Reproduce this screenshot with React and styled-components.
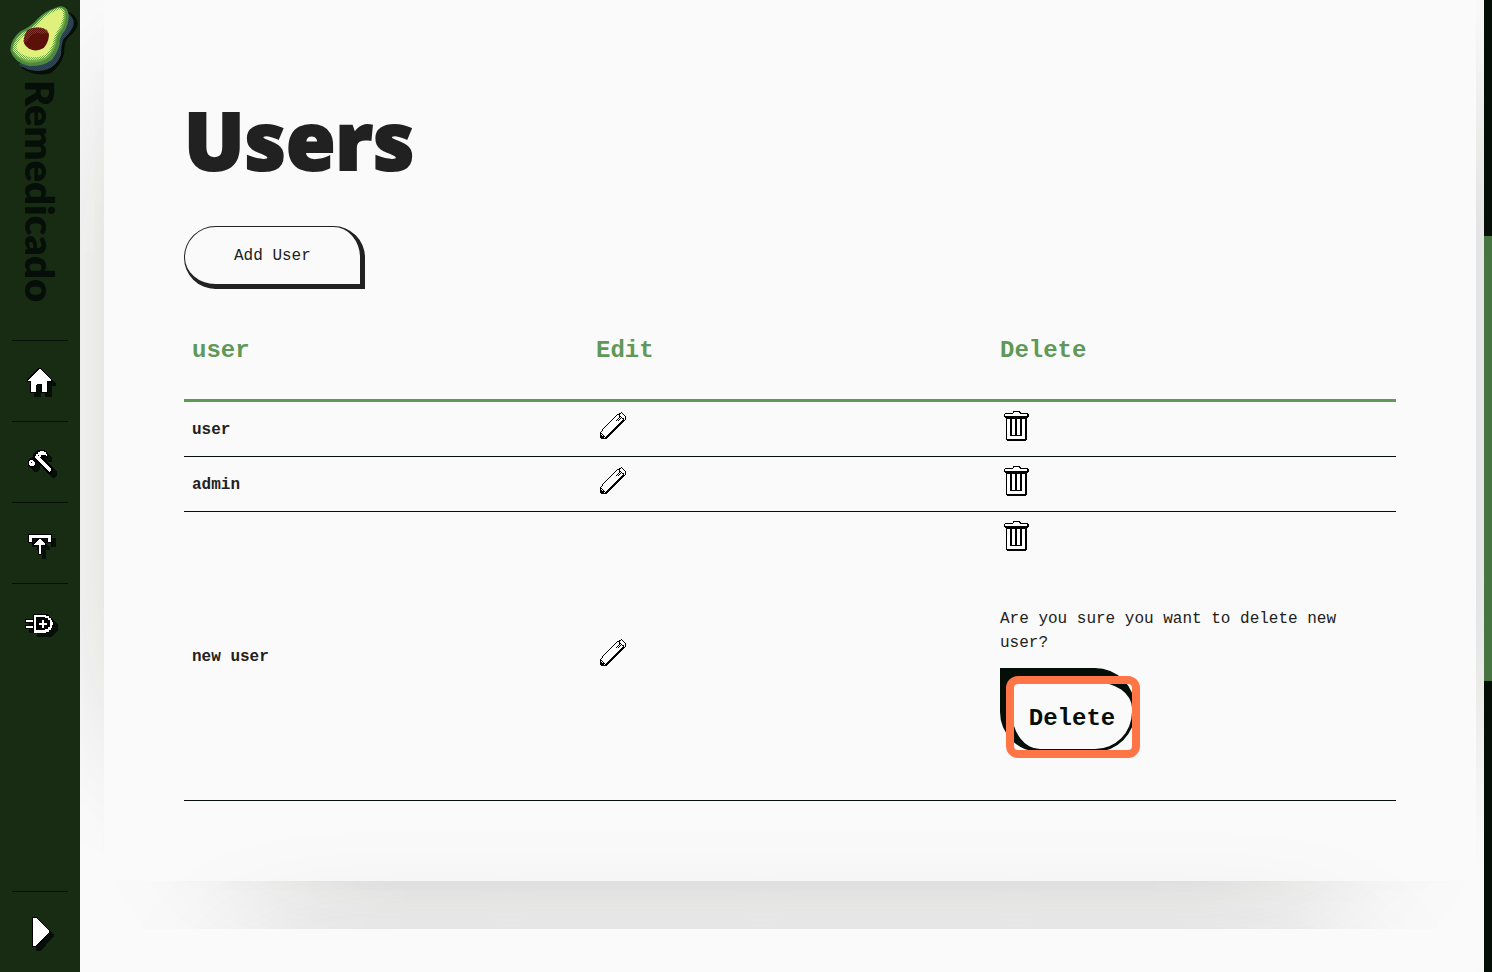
import React from "react";
import styled, { createGlobalStyle } from "styled-components";

const Global = createGlobalStyle`
  *, *::before, *::after { box-sizing: border-box; }
  body { margin: 0; background: #fafafa; color: #212121; font: 16px/24px "Liberation Mono", monospace; }
  h1, p { margin: 0; }
`;

const Shell = styled.div`
  display: grid;
  grid-template-columns: 80px minmax(0, 1fr) 8px;
  height: 100vh;
  overflow: hidden;
`;

const Sidebar = styled.nav`
  display: flex;
  flex-direction: column;
  align-items: center;
  background: #182c14;
`;

const Brand = styled.a`
  display: flex;
  flex-direction: column;
  align-items: center;
  height: 340px;
  color: #060f07;
  text-decoration: none;
`;

const BrandName = styled.span`
  writing-mode: vertical-rl;
  font: 800 40px/48px Lato, sans-serif;
`;

const NavLink = styled.a`
  display: flex;
  justify-content: center;
  align-items: center;
  width: 56px;
  height: 81px;
  border-top: 1px solid #060f07;
  margin-top: ${(p) => (p.$last ? "auto" : "0")};
`;

const NavIcon = styled.svg`
  display: block;
  width: 32px;
  height: 32px;
  overflow: visible;
  fill: #fff;
  shape-rendering: crispEdges;
  filter: drop-shadow(4px 4px 0 #060f07);
`;

const Main = styled.main`
  display: flex;
  flex-direction: column;
  gap: 48px;
  padding: 0 8px 0 24px;
  overflow: hidden;
`;

const Panel = styled.section`
  flex: none;
  margin-top: ${(p) => (p.$next ? "0" : "-48px")};
  min-height: ${(p) => (p.$next ? "600px" : "0")};
  padding: 139px 80px 80px;
  background: #fafafa;
  box-shadow:
    -100px 0 140px -150px rgba(20, 22, 16, 0.28),
    100px 0 140px -150px rgba(20, 22, 16, 0.34),
    0 100px 140px -150px rgba(20, 22, 16, 0.34),
    0 -100px 140px -150px rgba(20, 22, 16, 0.26);
`;

const Title = styled.h1`
  margin-bottom: 39px;
  font: 900 80px/96px "Noto Sans", sans-serif;
  -webkit-text-stroke: 2px #212121;
`;

const AddButton = styled.button`
  display: block;
  height: 63px;
  padding: 0 49px;
  border: 1px solid #212121;
  border-width: 1px 5px 5px 1px;
  border-radius: 32px 32px 0 32px;
  background: #fafafa;
  color: #212121;
  font: inherit;
`;

const Table = styled.table`
  width: 100%;
  margin-top: 32px;
  table-layout: fixed;
  border-collapse: separate;
  border-spacing: 0;
  text-align: left;
`;

const Head = styled.th`
  height: 81px;
  padding: 16px 8px 0;
  vertical-align: top;
  border-bottom: 3px solid #5f9857;
  color: #5f9857;
  font: 700 24px/28px "Liberation Mono", monospace;
`;

const Cell = styled.td`
  height: 55px;
  padding: ${(p) => (p.$name ? "10px 8px 8px" : "8px")};
  border-bottom: 1px solid #060f07;
  font-weight: ${(p) => (p.$name ? 700 : 400)};
`;

const IconButton = styled.button`
  display: block;
  height: 38px;
  padding: 0 0 6px;
  border: 0;
  background: none;
`;

const RowIcon = styled.svg`
  display: block;
  width: 32px;
  height: 32px;
  shape-rendering: crispEdges;
`;

const Confirm = styled.div`
  padding: 49px 0 40px;
`;

const DeleteButton = styled.button`
  position: relative;
  display: block;
  margin-top: 13px;
  padding: 6px 0 0;
  width: 135px;
  height: 84px;
  border: 3px solid #060f07;
  border-width: 14px 3px 3px 12px;
  border-radius: 0 40px 40px 40px;
  background: #fafafa;
  color: #060f07;
  font: 700 24px/28px "Liberation Mono", monospace;

  &::after {
    content: "";
    position: absolute;
    inset: -6px -8px -9px -6px;
    border: 8px solid #ff7545;
    border-radius: 12px;
  }
`;

const Rail = styled.div`
  display: grid;
  grid-template-rows: 236fr 445fr 291fr;
  background: #060f07;
`;

const Thumb = styled.div`
  grid-row: 2;
  background: #467541;
`;

function Avocado() {
  const body =
    "M150 24Q172 12 186 28Q198 52 182 88Q162 112 164 132Q158 158 140 180Q114 200 72 198Q28 188 16 152Q16 118 46 94Q80 78 98 56Q122 32 150 24Z";
  return (
    <svg width="80" height="80" viewBox="-15 0 240 240" aria-hidden="true">
      <defs>
        <pattern id="dither" width="6" height="6" patternUnits="userSpaceOnUse">
          <path d="M0 0h3v3H0zM3 3h3v3H3z" fill="#dff07c" />
        </pattern>
        <pattern id="blue" width="6" height="6" patternUnits="userSpaceOnUse">
          <path d="M0 0h3v3H0zM3 3h3v3H3z" fill="#3d5868" />
        </pattern>
        <pattern id="red" width="6" height="6" patternUnits="userSpaceOnUse">
          <path d="M0 0h3v3H0zM3 3h3v3H3z" fill="#a62a18" />
        </pattern>
      </defs>
      <path d="M190 36Q216 44 218 70Q216 94 190 112Q176 130 178 160Q166 202 136 220Q90 232 50 204Z" fill="#060f07" />
      <path d="M182 36Q208 48 206 74Q200 94 176 116Q168 136 168 164Q156 196 128 208Q84 222 42 194Z" fill="#263b49" />
      <path d="M182 36Q208 48 206 74Q200 94 176 116Q168 136 168 164Q156 196 128 208Q84 222 42 194Z" fill="url(#blue)" opacity=".5" />
      <path d={body} fill="#4d893f" />
      <path d="M150 27Q170 18 180 32Q188 52 174 84Q154 108 153 132Q148 154 132 172Q108 190 72 188Q34 180 22 150Q22 122 50 99Q84 82 102 60Q124 36 150 27Z" fill="#72aa46" />
      <path d="M150 27Q170 18 178 32Q182 52 168 84Q150 108 148 132Q140 154 128 168Q106 182 72 180Q36 174 24 150Q24 122 52 99Q86 82 104 60Q126 36 150 27Z" fill="url(#dither)" />
      <path d="M150 34Q170 22 174 38Q176 58 162 84Q146 108 143 132Q134 154 120 164Q98 174 73 171Q42 164 34 144Q36 122 58 106Q88 88 108 64Q128 42 150 34Z" fill="#dff07c" />
      <path d="M68 90Q82 80 108 83Q131 88 132 106Q130 130 116 144Q100 154 82 150Q58 142 56 124Q56 106 68 90Z" fill="#5c100a" />
      <path d="M68 90Q82 80 108 83Q131 88 130 98Q110 104 96 98Q74 104 66 124Q58 130 56 122Q56 106 68 90Z" fill="url(#red)" />
    </svg>
  );
}

function Pencil() {
  return (
    <RowIcon viewBox="0 0 32 32" fill="none" stroke="#000" aria-hidden="true">
      <path d="M4.5 28V23L7.5 18.5L21.500 4.500L23.500 4L25.500 2.500L29.500 6.500V9.500L14 25L9 28.500Z" fill="#fff" />
      <path d="M28 10L12 26L9 28.500" strokeWidth="2" />
      <path d="M5.500 23.500L9.500 27.500M23.500 4.500V6L28 9.500M19.500 11.500L24.500 6.500M21.500 11.500L25.500 7.500" />
      <path d="M4 25h2v1h2v3H5v-1H4z" fill="#000" stroke="none" />
    </RowIcon>
  );
}

function Trash() {
  return (
    <RowIcon viewBox="0 0 32 32" aria-hidden="true">
      <path d="M13 1h7v1h1v1h7v1h1v3h-1v1h-1v22h-1v1H7v-1H6V8H5V7H4V4h1V3h8z" fill="#000" />
      <path d="M14 2h5v1h1v1h7v2H5V4h8V3h1z" fill="#fff" />
      <path d="M7 9h3v17h12V9h3v20H7zM12 9h3v16h-3zM17 9h3v16h-3z" fill="#fff" />
    </RowIcon>
  );
}

const shapes = {
  Home: <path stroke="#000" paintOrder="stroke" strokeWidth="2" d="M15 4h1l11 11v1h-4v11h-5v-7l-1-1h-4l-1 1v7H7V16H4v-1z" />,
  Tools: (
    <g>
      <path d="M4 14l3-2 2-2 1-3 4-3h7l3 4v4h-4l9 10v3l-3 3h-2L14 16h-2v4l-3 2H6l-2-3z" fill="#000" />
      <path d="M6 14h3v1h1v1h1v3h-1v1H6v-1H5v-4h1z" />
      <path d="M11 10h1V8h2V6h2V5h4v1h2v2h1v2h-1V9h-5v2h-1v2h-4v-1h-1z" />
      <path d="M12 12h3v1h-3zM13 13L15 11L27 23V24L26 26H25Z" />
      <path d="M7 16h1v1H7zM14 9h1v1h-1z" fill="#000" />
    </g>
  ),
  Upload: (
    <g stroke="#000" strokeWidth="2" paintOrder="stroke">
      <path d="M5 8h22v7h-3v-4H8v4H5z" />
      <path d="M15 12h1l5 5v1h-4v9h-2v-9h-5v-1z" />
    </g>
  ),
  "Log out": (
    <g>
      <path d="M1 11h8V6h14l4 3 3 4v5l-3 4-4 3H9v-4H1v-4h8v-2H1z" fill="#000" />
      <path d="M10 7h12v1h3v2h2v2h1v2h1v3h-1v3h-1v2h-2v2h-3v1H10zM12 9v13h9v-1h3v-2h2v-7h-2v-2h-3V9zM2 12h7v2H2zM2 18h7v2H2zM18 12h2v3h3v2h-3v3h-2v-3h-3v-2h3z" fillRule="evenodd" />
    </g>
  ),
  Expand: <path stroke="#000" paintOrder="stroke" strokeWidth="2" d="M9 2h3l13 13v1L12 30H9z" />,
};

function NavItem({ name, last }) {
  return (
    <NavLink href="#" aria-label={name} $last={last}>
      <NavIcon viewBox="0 0 32 32" aria-hidden="true">{shapes[name]}</NavIcon>
    </NavLink>
  );
}

function UserRow({ name, confirming }) {
  return (
    <tr>
      <Cell $name>{name}</Cell>
      <Cell>
        <IconButton aria-label={`Edit ${name}`}><Pencil /></IconButton>
      </Cell>
      <Cell>
        <IconButton aria-label={`Delete ${name}`}><Trash /></IconButton>
        {confirming && (
          <Confirm>
            <p>{`Are you sure you want to delete ${name}?`}</p>
            <DeleteButton>Delete</DeleteButton>
          </Confirm>
        )}
      </Cell>
    </tr>
  );
}

export default function App() {
  return (
    <>
      <Global />
      <Shell>
        <Sidebar>
          <Brand href="#">
            <Avocado />
            <BrandName>Remedicado</BrandName>
          </Brand>
          <NavItem name="Home" />
          <NavItem name="Tools" />
          <NavItem name="Upload" />
          <NavItem name="Log out" />
          <NavItem name="Expand" last />
        </Sidebar>
        <Main>
          <Panel>
            <Title>Users</Title>
            <AddButton>Add User</AddButton>
            <Table>
              <thead>
                <tr>
                  <Head>user</Head>
                  <Head>Edit</Head>
                  <Head>Delete</Head>
                </tr>
              </thead>
              <tbody>
                <UserRow name="user" />
                <UserRow name="admin" />
                <UserRow name="new user" confirming />
              </tbody>
            </Table>
          </Panel>
          <Panel $next />
        </Main>
        <Rail>
          <Thumb />
        </Rail>
      </Shell>
    </>
  );
}
